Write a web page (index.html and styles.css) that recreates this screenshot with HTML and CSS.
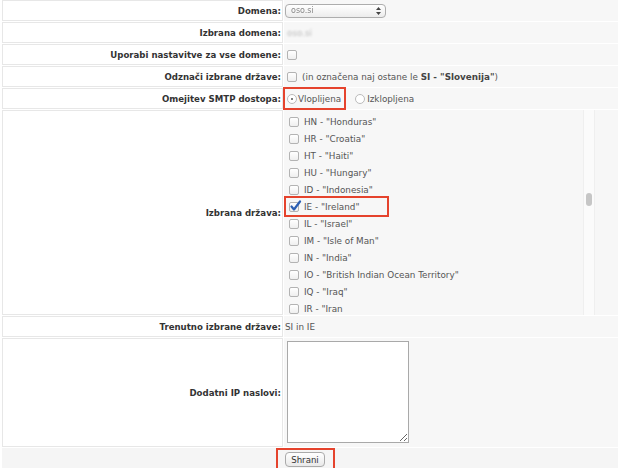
FILE: index.html
```html
<!DOCTYPE html>
<html lang="sl">
<head>
<meta charset="utf-8">
<title>Omejitev SMTP dostopa</title>
<link rel="stylesheet" href="styles.css">
</head>
<body>
<div class="form">
  <div class="lbl">Domena:</div>
  <div class="val">
    <span class="select"><span class="blur">oso.si</span>
      <svg class="arrows" width="5" height="8" viewBox="0 0 5 8"><path d="M2.5 0 L5 3 L0 3 Z M2.5 8 L5 5 L0 5 Z" fill="#444"/></svg>
    </span>
  </div>

  <div class="lbl">Izbrana domena:</div>
  <div class="val"><span class="blur2">oso.si</span></div>

  <div class="lbl">Uporabi nastavitve za vse domene:</div>
  <div class="val"><span class="cb ml2"></span></div>

  <div class="lbl">Odznači izbrane države:</div>
  <div class="val"><span class="cb ml2"></span><span class="note">(in označena naj ostane le <b>SI - "Slovenija"</b>)</span></div>

  <div class="lbl">Omejitev SMTP dostopa:</div>
  <div class="val radios">
    <span class="hl radio-opt"><span class="rd on"></span>Vloplijena</span>
    <span class="radio-opt second"><span class="rd"></span>Izklopljena</span>
  </div>

  <div class="lbl">Izbrana država:</div>
  <div class="val list">
    <div class="items">
      <div class="item"><span class="cb"></span>HN - "Honduras"</div>
      <div class="item"><span class="cb"></span>HR - "Croatia"</div>
      <div class="item"><span class="cb"></span>HT - "Haiti"</div>
      <div class="item"><span class="cb"></span>HU - "Hungary"</div>
      <div class="item"><span class="cb"></span>ID - "Indonesia"</div>
      <div class="item hl hl-item"><span class="cb checked"><svg width="13" height="13" viewBox="0 0 13 13"><path d="M2.5 6.5 L5 9.5 L11 1.5" fill="none" stroke="#2c5fb3" stroke-width="2.2" stroke-linecap="round" stroke-linejoin="round"/></svg></span>IE - "Ireland"</div>
      <div class="item"><span class="cb"></span>IL - "Israel"</div>
      <div class="item"><span class="cb"></span>IM - "Isle of Man"</div>
      <div class="item"><span class="cb"></span>IN - "India"</div>
      <div class="item"><span class="cb"></span>IO - "British Indian Ocean Territory"</div>
      <div class="item"><span class="cb"></span>IQ - "Iraq"</div>
      <div class="item"><span class="cb"></span>IR - "Iran</div>
    </div>
    <div class="scrollbar"><div class="thumb"></div></div>
  </div>

  <div class="lbl">Trenutno izbrane države:</div>
  <div class="val">SI in IE</div>

  <div class="lbl">Dodatni IP naslovi:</div>
  <div class="val top"><textarea class="ta"></textarea></div>

  <div class="footer">
    <span class="hl btn-wrap"><button class="btn" type="button">Shrani</button></span>
  </div>
</div>
</body>
</html>
```

FILE: styles.css
```css
html, body {
  margin: 0;
  padding: 0;
  background: #fff;
}

body {
  font-family: "DejaVu Sans", Verdana, sans-serif;
  font-size: 8.8px;
  color: #444;
}

.form {
  display: grid;
  grid-template-columns: 281px 334px;
  grid-template-rows: 21px 21px 21px 21px 21px 205px 21px 109px 20px;
  gap: 1px;
  padding-left: 2px;
}

.lbl {
  background: #fff;
  border: 1px solid #e7e7e7;
  display: flex;
  align-items: center;
  justify-content: flex-end;
  padding-right: 1px;
  font-weight: bold;
  font-size: 8.6px;
  color: #333;
  white-space: nowrap;
}

.val {
  background: #f7f7f7;
  display: flex;
  align-items: center;
  padding-left: 1px;
  color: #555;
  white-space: nowrap;
}

.val.top {
  align-items: flex-start;
  padding-top: 3px;
  padding-left: 3px;
}

.select {
  display: inline-flex;
  align-items: center;
  justify-content: space-between;
  box-sizing: border-box;
  width: 101px;
  height: 14px;
  border: 1px solid #adadad;
  border-radius: 4px;
  background: linear-gradient(#fff, #ececec);
  padding: 0 4px 0 5px;
}

.blur {
  color: #888;
  filter: blur(0.7px);
  font-size: 8px;
}

.blur2 {
  color: #bbb;
  filter: blur(1.2px);
  margin-left: 2px;
}

.arrows {
  display: block;
}

.cb {
  position: relative;
  display: inline-block;
  box-sizing: border-box;
  width: 10px;
  height: 10px;
  border: 1px solid #b3b3b3;
  border-radius: 2px;
  background: linear-gradient(#fff, #efefef);
  flex: none;
}

.cb svg {
  position: absolute;
  left: -1px;
  top: -3px;
}

.ml2 {
  margin-left: 2px;
}

.note {
  margin-left: 5px;
}

.note b {
  color: #444;
}

.radios {
  align-items: stretch;
  padding-left: 1px;
}

.radio-opt {
  display: inline-flex;
  align-items: center;
  color: #555;
}

.hl {
  outline: 2px solid #e5432d;
}

.radio-opt.hl {
  padding: 0 3px 0 2px;
  margin: 1px 0;
}

.radio-opt.hl .rd {
  margin-right: 1px;
}

.radio-opt.second {
  margin-left: 11px;
}

.rd {
  position: relative;
  display: inline-block;
  box-sizing: border-box;
  width: 10px;
  height: 10px;
  border: 1px solid #bbb;
  border-radius: 50%;
  background: #fff;
  margin-right: 2px;
}

.rd.on::after {
  content: "";
  position: absolute;
  left: 3px;
  top: 3px;
  width: 2px;
  height: 2px;
  border-radius: 50%;
  background: #555;
}

.val.list {
  padding: 0;
  align-items: stretch;
}

.items {
  flex: 1;
  overflow: hidden;
  padding: 3px 0 0 2px;
}

.item {
  display: flex;
  align-items: center;
  height: 17px;
  padding-left: 3px;
  gap: 5px;
  color: #555;
}

.item.hl-item {
  width: 101px;
  box-sizing: border-box;
}

.scrollbar {
  width: 10px;
  margin-right: 23px;
  background: #fbfbfb;
  border-left: 1px solid #efefef;
  border-right: 1px solid #efefef;
  padding-top: 83px;
}

.thumb {
  width: 6px;
  height: 13px;
  margin-left: 2px;
  border-radius: 3px;
  background: #c6c6c6;
}

.ta {
  box-sizing: border-box;
  width: 122px;
  height: 102px;
  border: 1px solid #a9a9a9;
  background: #fff;
  margin: 0;
  padding: 2px;
  font: inherit;
}

.footer {
  grid-column: 1 / 3;
  background: #f5f5f5;
  display: flex;
  align-items: flex-start;
  padding-left: 276px;
}

.btn-wrap {
  display: inline-flex;
  align-items: center;
  margin-top: 2px;
  padding: 2px 8px 2px 7px;
}

.btn {
  box-sizing: border-box;
  width: 40px;
  height: 15px;
  padding: 0;
  border: 1px solid #aaa;
  border-radius: 4px;
  background: linear-gradient(#fff, #e9e9e9);
  font-family: "DejaVu Sans", Verdana, sans-serif;
  font-size: 8.6px;
  color: #333;
}
```
